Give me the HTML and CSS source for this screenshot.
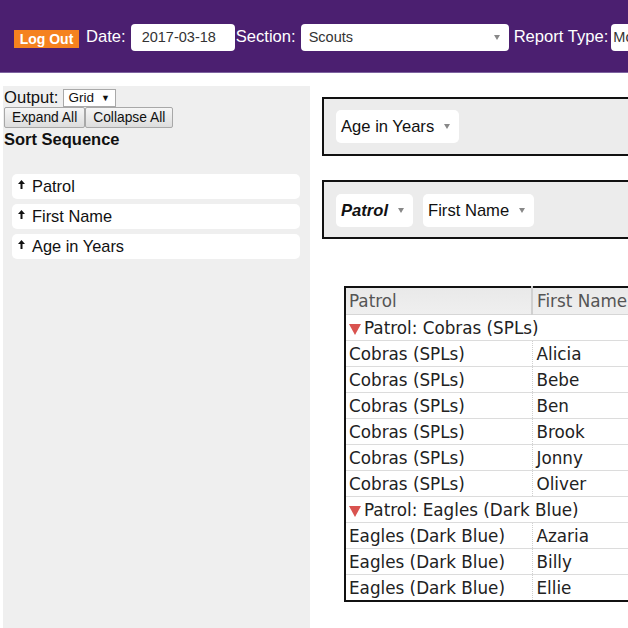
FILE: index.html
```html
<!DOCTYPE html>
<html>
<head>
<meta charset="utf-8">
<link rel="stylesheet" href="styles.css">
</head>
<body>
<header class="topbar">
  <button class="logout">Log Out</button>
  <span class="lbl lbl-date">Date:</span>
  <div class="field field-date">2017-03-18</div>
  <span class="lbl lbl-section">Section:</span>
  <div class="field field-section">Scouts<span class="caret-gray"></span></div>
  <span class="lbl lbl-report">Report Type:</span>
  <div class="field field-report">Monthly Report</div>
</header>
<main class="main">
  <aside class="side">
    <div class="output-row">
      <span class="output-lbl">Output:</span>
      <div class="mini-select">Grid <span class="mini-caret">&#9660;</span></div>
    </div>
    <div class="btn-row">
      <button class="btn">Expand All</button><button class="btn">Collapse All</button>
    </div>
    <div class="sort-title">Sort Sequence</div>
    <ul class="sort-list">
      <li class="sort-item"><svg class="up" width="7" height="9" viewBox="0 0 7 9"><path d="M3.5 0 L7 4 L4.5 4 L4.5 9 L2.5 9 L2.5 4 L0 4 Z" fill="#111"/></svg>Patrol</li>
      <li class="sort-item"><svg class="up" width="7" height="9" viewBox="0 0 7 9"><path d="M3.5 0 L7 4 L4.5 4 L4.5 9 L2.5 9 L2.5 4 L0 4 Z" fill="#111"/></svg>First Name</li>
      <li class="sort-item"><svg class="up" width="7" height="9" viewBox="0 0 7 9"><path d="M3.5 0 L7 4 L4.5 4 L4.5 9 L2.5 9 L2.5 4 L0 4 Z" fill="#111"/></svg>Age in Years</li>
    </ul>
  </aside>
  <section class="content">
    <div class="dropbox">
      <div class="pill">Age in Years<span class="caret-gray"></span></div>
    </div>
    <div class="dropbox dropbox-2">
      <div class="pill pill-active">Patrol<span class="caret-gray"></span></div>
      <div class="pill">First Name<span class="caret-gray"></span></div>
    </div>
    <table class="grid">
      <thead>
        <tr><th class="c1">Patrol</th><th class="c2">First Name</th></tr>
      </thead>
      <tbody>
        <tr class="group"><td colspan="2"><svg class="tri" width="12" height="11" viewBox="0 0 12 11"><path d="M0 0 L12 0 L6 11 Z" fill="#d9534f"/></svg>Patrol: Cobras (SPLs)</td></tr>
        <tr><td class="c1">Cobras (SPLs)</td><td class="c2">Alicia</td></tr>
        <tr><td class="c1">Cobras (SPLs)</td><td class="c2">Bebe</td></tr>
        <tr><td class="c1">Cobras (SPLs)</td><td class="c2">Ben</td></tr>
        <tr><td class="c1">Cobras (SPLs)</td><td class="c2">Brook</td></tr>
        <tr><td class="c1">Cobras (SPLs)</td><td class="c2">Jonny</td></tr>
        <tr><td class="c1">Cobras (SPLs)</td><td class="c2">Oliver</td></tr>
        <tr class="group"><td colspan="2"><svg class="tri" width="12" height="11" viewBox="0 0 12 11"><path d="M0 0 L12 0 L6 11 Z" fill="#d9534f"/></svg>Patrol: Eagles (Dark Blue)</td></tr>
        <tr><td class="c1">Eagles (Dark Blue)</td><td class="c2">Azaria</td></tr>
        <tr><td class="c1">Eagles (Dark Blue)</td><td class="c2">Billy</td></tr>
        <tr><td class="c1">Eagles (Dark Blue)</td><td class="c2">Ellie</td></tr>
      </tbody>
    </table>
  </section>
</main>
</body>
</html>
```
FILE: styles.css
```css
html, body {
  margin: 0;
  padding: 0;
  width: 628px;
  height: 628px;
  overflow: hidden;
  background: #fff;
  font-family: "Liberation Sans", Arial, sans-serif;
  color: #111;
}

.topbar {
  display: flex;
  align-items: center;
  background: #4b1f70;
  border-bottom: 1px solid #7d63a0;
  padding: 2px 0 0 14px;
  box-sizing: border-box;
  height: 73px;
  white-space: nowrap;
}
.topbar > * {
  flex-shrink: 0;
}

.logout {
  background: #f5821f;
  color: #fff;
  font-family: "Liberation Sans", Arial, sans-serif;
  font-weight: bold;
  font-size: 14px;
  border: none;
  padding: 0;
  width: 65px;
  height: 18px;
  line-height: 18px;
  margin-top: 3px;
}

.lbl {
  color: #fff;
  font-size: 16.6px;
}
.lbl-date { margin-left: 7px; }
.lbl-section { margin-left: 1px; }
.lbl-report { margin-left: 5px; }

.field {
  background: #fff;
  border-radius: 4px;
  height: 27px;
  box-sizing: border-box;
  font-size: 14.5px;
  color: #333;
  display: flex;
  align-items: center;
}
.field-date {
  width: 104px;
  margin-left: 5px;
  padding-left: 11px;
}
.field-section {
  width: 208px;
  margin-left: 5px;
  padding-left: 8px;
  justify-content: space-between;
  padding-right: 9px;
}
.field-report {
  width: 200px;
  margin-left: 3px;
  padding-left: 2px;
}

.caret-gray {
  display: inline-block;
  width: 0;
  height: 0;
  border-left: 3px solid transparent;
  border-right: 3px solid transparent;
  border-top: 5px solid #888;
}

.main {
  display: flex;
  align-items: flex-start;
}

.side {
  width: 307px;
  height: 542px;
  margin: 13px 0 0 3px;
  background: #efefef;
  padding: 2px 0 0 1px;
  box-sizing: border-box;
  flex-shrink: 0;
}

.output-row {
  display: flex;
  align-items: center;
  height: 19px;
}
.output-lbl {
  font-size: 16.6px;
  color: #111;
}
.mini-select {
  margin-left: 5px;
  height: 18px;
  width: 53px;
  box-sizing: border-box;
  background: #fff;
  border: 1px solid #a9a9a9;
  font-size: 13.5px;
  display: flex;
  align-items: center;
  padding-left: 4px;
  color: #111;
}
.mini-caret {
  font-size: 9px;
  margin-left: 7px;
}

.btn-row {
  display: flex;
}
.btn {
  font-family: "Liberation Sans", Arial, sans-serif;
  font-size: 13.8px;
  color: #111;
  height: 21px;
  padding: 0 7px;
  margin: 0;
  border: 1px solid #a8a8a8;
  border-radius: 2px;
  background: linear-gradient(#f6f6f6, #dddddd);
}

.sort-title {
  font-weight: bold;
  font-size: 16.5px;
  margin-top: 2px;
  line-height: 19px;
}

.sort-list {
  list-style: none;
  margin: 25px 0 0 8px;
  padding: 0;
  width: 288px;
  display: flex;
  flex-direction: column;
  gap: 5px;
}
.sort-item {
  background: #fff;
  border-radius: 5px;
  height: 25px;
  display: flex;
  align-items: center;
  font-size: 16.4px;
  color: #111;
  padding-left: 6px;
}
.up {
  margin-right: 7px;
  margin-top: -4px;
}

.content {
  margin: 24px 0 0 12px;
  display: flex;
  flex-direction: column;
  flex-shrink: 0;
}

.dropbox {
  width: 400px;
  height: 59px;
  box-sizing: border-box;
  border: 2px solid #111;
  background: #ececec;
  padding: 11px 12px;
  display: flex;
  gap: 10px;
}
.dropbox-2 {
  margin-top: 24px;
  padding-top: 12px;
}

.pill {
  background: #fff;
  border-radius: 5px;
  height: 33px;
  display: flex;
  align-items: center;
  padding: 0 9px 0 5px;
  font-size: 16.6px;
  color: #111;
  gap: 10px;
}
.pill-active {
  font-weight: bold;
  font-style: italic;
}

.grid {
  margin: 47px 0 0 22px;
  border-collapse: collapse;
  border: 2px solid #111;
  font-family: "DejaVu Sans", Verdana, sans-serif;
  font-size: 16.8px;
  color: #222;
  width: 330px;
}
.grid th, .grid td {
  height: 25px;
  padding: 0 0 0 3px;
  text-align: left;
  white-space: nowrap;
  border-bottom: 1px solid #dcdcdc;
  font-weight: normal;
}
.grid th {
  background: linear-gradient(#e9e9e9, #efefef);
  color: #555;
  height: 26px;
  border-bottom: 1px solid #d6d6d6;
}
.grid th.c1 {
  border-right: 2px solid #d0d0d0;
}
.grid .c1 {
  width: 182px;
}
.grid td.c1 {
  border-right: 1px dotted #d0d0d0;
}
.grid .c2 {
  padding-left: 4px;
}
.tri {
  margin-right: 3px;
  vertical-align: -1px;
}
```
